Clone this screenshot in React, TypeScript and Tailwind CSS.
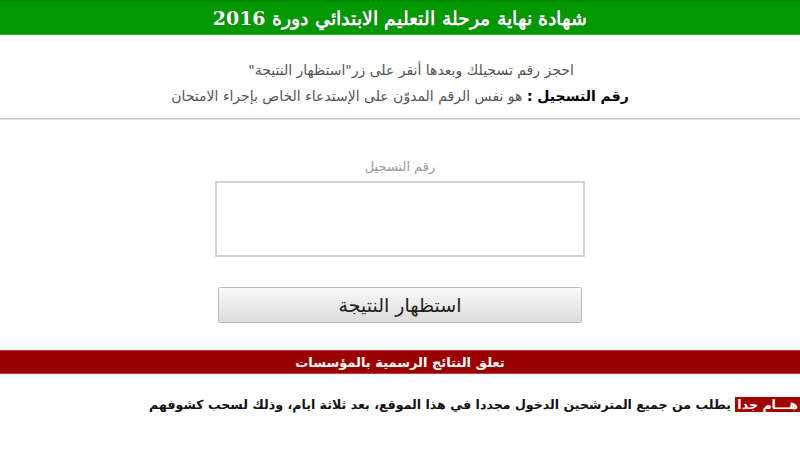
import React from "react";

export default function App() {
  return (
    <div
      dir="rtl"
      className="w-[800px] h-[460px] bg-white overflow-hidden"
      style={{ fontFamily: '"DejaVu Sans", "Liberation Sans", sans-serif' }}
    >
      <div className="h-[35px] bg-[#009900] border-t-2 border-[#008a00] border-b border-b-[#3aa83a] flex items-center justify-center">
        <span className="text-white font-bold text-[19px] leading-none [text-shadow:0_0_1px_#004400]" style={{ fontFamily: '"DejaVu Serif", "Liberation Serif", serif' }}>
          شهادة نهاية مرحلة التعليم الابتدائي دورة 2016
        </span>
      </div>

      <div className="pt-[25px] flex flex-col items-center text-[14px] leading-[20px] text-[#555]">
        <div className="ml-[22px]">احجز رقم تسجيلك وبعدها أنقر على زر"استظهار النتيجة"</div>
        <div className="mt-[6px]">
          <span className="font-bold text-black">رقم التسجيل :</span> هو نفس الرقم المدوّن على الإستدعاء الخاص بإجراء الامتحان
        </div>
      </div>

      <div className="mt-[12px] h-[2px] bg-[#c8c8c8] border-b border-[#e6e6e6]" />

      <div className="flex flex-col items-center">
        <div className="mt-[39px] text-[13px] leading-[16px] text-[#9a9a9a]">رقم التسجيل</div>
        <div className="mt-[6px] w-[370px] h-[76px] border-2 border-[#d4d4d4] bg-white" />
        <button className="mt-[30px] w-[364px] h-[36px] border border-[#bdbdbd] rounded-[2px] bg-gradient-to-b from-[#fafafa] to-[#dcdcdc] text-[19px] text-[#222] flex items-center justify-center">
          استظهار النتيجة
        </button>
      </div>

      <div className="mt-[27px] h-[24px] bg-[#9b0000] border-y border-[#c04040] flex items-center justify-center">
        <span className="text-white font-bold text-[13px] leading-none">تعلق النتائج الرسمية بالمؤسسات</span>
      </div>

      <div className="mt-[22px] text-[12.6px] leading-[18px] font-bold text-[#111]">
        <span className="bg-[#a30000] text-white px-[2px]">هـــام جدا</span> يطلب من جميع المترشحين الدخول مجددا في هذا الموقع، بعد ثلاثة ايام، وذلك لسحب كشوفهم
      </div>
    </div>
  );
}
